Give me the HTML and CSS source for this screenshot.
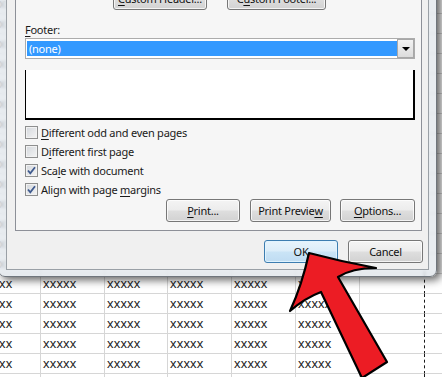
FILE: index.html
```html
<!DOCTYPE html>
<html>
<head>
<meta charset="utf-8">
<link rel="stylesheet" href="styles.css">
</head>
<body>
<div class="sheet">
  <div class="c">xxxxx</div><div class="e"></div><div class="e"></div><div class="e"></div><div class="e"></div><div class="e"></div><div class="e d"></div><div class="e"></div>
  <div class="c">xxxxx</div><div class="e"></div><div class="e"></div><div class="e"></div><div class="e"></div><div class="e"></div><div class="e d"></div><div class="e"></div>
  <div class="c">xxxxx</div><div class="e"></div><div class="e"></div><div class="e"></div><div class="e"></div><div class="e"></div><div class="e d"></div><div class="e"></div>
  <div class="c">xxxxx</div><div class="e"></div><div class="e"></div><div class="e"></div><div class="e"></div><div class="e"></div><div class="e d"></div><div class="e"></div>
  <div class="c">xxxxx</div><div class="e"></div><div class="e"></div><div class="e"></div><div class="e"></div><div class="e"></div><div class="e d"></div><div class="e"></div>
  <div class="c">xxxxx</div><div class="e"></div><div class="e"></div><div class="e"></div><div class="e"></div><div class="e"></div><div class="e d"></div><div class="e"></div>
  <div class="c">xxxxx</div><div class="e"></div><div class="e"></div><div class="e"></div><div class="e"></div><div class="e"></div><div class="e d"></div><div class="e"></div>
  <div class="c">xxxxx</div><div class="e"></div><div class="e"></div><div class="e"></div><div class="e"></div><div class="e"></div><div class="e d"></div><div class="e"></div>
  <div class="c">xxxxx</div><div class="e"></div><div class="e"></div><div class="e"></div><div class="e"></div><div class="e"></div><div class="e d"></div><div class="e"></div>
  <div class="c">xxxxx</div><div class="e"></div><div class="e"></div><div class="e"></div><div class="e"></div><div class="e"></div><div class="e d"></div><div class="e"></div>
  <div class="c">xxxxx</div><div class="e"></div><div class="e"></div><div class="e"></div><div class="e"></div><div class="e"></div><div class="e d"></div><div class="e"></div>
  <div class="c">xxxxx</div><div class="e"></div><div class="e"></div><div class="e"></div><div class="e"></div><div class="e"></div><div class="e d"></div><div class="e"></div>
  <div class="c">xxxxx</div><div class="e"></div><div class="e"></div><div class="e"></div><div class="e"></div><div class="e"></div><div class="e d"></div><div class="e"></div>
  <div class="c">xxxxx</div><div class="e"></div><div class="e"></div><div class="e"></div><div class="e"></div><div class="e"></div><div class="e d"></div><div class="e"></div>
  <div class="c">xxxxx</div><div class="c">xxxxx</div><div class="c">xxxxx</div><div class="c">xxxxx</div><div class="c">xxxxx</div><div class="c">xxxxx</div><div class="e d"></div><div class="e"></div>
  <div class="c">xxxxx</div><div class="c">xxxxx</div><div class="c">xxxxx</div><div class="c">xxxxx</div><div class="c">xxxxx</div><div class="c">xxxxx</div><div class="e d"></div><div class="e"></div>
  <div class="c">xxxxx</div><div class="c">xxxxx</div><div class="c">xxxxx</div><div class="c">xxxxx</div><div class="c">xxxxx</div><div class="c">xxxxx</div><div class="e d"></div><div class="e"></div>
  <div class="c">xxxxx</div><div class="c">xxxxx</div><div class="c">xxxxx</div><div class="c">xxxxx</div><div class="c">xxxxx</div><div class="c">xxxxx</div><div class="e d"></div><div class="e"></div>
  <div class="c">xxxxx</div><div class="c">xxxxx</div><div class="c">xxxxx</div><div class="c">xxxxx</div><div class="c">xxxxx</div><div class="c">xxxxx</div><div class="e d"></div><div class="e"></div>
  <div class="c">xxxxx</div><div class="c">xxxxx</div><div class="c">xxxxx</div><div class="c">xxxxx</div><div class="c">xxxxx</div><div class="c">xxxxx</div><div class="e d"></div><div class="e"></div>
</div>

<div class="dialog">
  <div class="client">
    <div class="panel">
      <div class="crow">
        <div class="btn w-ch"><u>C</u>ustom Header...</div>
        <div class="btn w-cf">C<u>u</u>stom Footer...</div>
      </div>
      <div class="lbl"><u>F</u>ooter:</div>
      <div class="combo">
        <div class="sel">(none)</div>
        <div class="drop"><span class="tri"></span></div>
      </div>
      <div class="preview"></div>
      <div class="checks">
        <div class="chk"><span class="cb"></span><span><u>D</u>ifferent odd and even pages</span></div>
        <div class="chk"><span class="cb"></span><span>D<u>i</u>fferent first page</span></div>
        <div class="chk"><span class="cb"><svg class="mark" viewBox="0 0 11 11"><polyline points="2,5.5 4.3,8.3 9,2.2"/></svg></span><span>Sca<u>l</u>e with document</span></div>
        <div class="chk"><span class="cb"><svg class="mark" viewBox="0 0 11 11"><polyline points="2,5.5 4.3,8.3 9,2.2"/></svg></span><span>Align with page <u>m</u>argins</span></div>
      </div>
      <div class="brow">
        <div class="btn w-pr"><u>P</u>rint...</div>
        <div class="btn w-pp">Print Previe<u>w</u></div>
        <div class="btn w-op"><u>O</u>ptions...</div>
      </div>
    </div>
    <div class="okrow">
      <div class="btn def w-ok">OK</div>
      <div class="btn w-cn">Cancel</div>
    </div>
  </div>
</div>

<svg class="arrow" viewBox="0 0 442 377" width="442" height="377">
  <path d="M309,253 Q343,262 376,268 Q352,268 338,277 L387,362 L362,378 L321,292 Q305,298 290,311 Q302,285 309,253 Z"/>
</svg>
</body>
</html>
```
FILE: styles.css
```css
* { box-sizing: border-box; }
html, body { margin: 0; padding: 0; }
body {
  width: 442px;
  height: 377px;
  overflow: hidden;
  position: relative;
  background: #ffffff;
  font-family: "Noto Sans", "Open Sans", sans-serif;
  font-size: 11px;
  letter-spacing: -0.25px;
  color: #1a1a1a;
}

/* spreadsheet behind */
.sheet {
  display: grid;
  grid-template-columns: 64px 64px 63px 64px 64px 64px 65px 60px;
  grid-auto-rows: 20px;
  margin-top: -6px;
  margin-left: -23px;
  width: 508px;
  font-family: "Liberation Sans", Arial, sans-serif;
  font-size: 13px;
  letter-spacing: 0.2px;
  color: #1b1b1b;
}
.c, .e {
  border-right: 1px solid #d6d6d6;
  border-bottom: 1px solid #d6d6d6;
  line-height: 19px;
  padding-left: 2px;
  white-space: nowrap;
}
.d { border-right: 1px dashed #1a1a1a; }

/* dialog window */
.dialog {
  position: absolute;
  left: -2px;
  top: -41px;
  width: 439px;
  padding: 7px 7px 6px 7px;
  background: rgba(226, 231, 236, 0.80);
  backdrop-filter: blur(1.5px);
  border: 1px solid #6f757c;
  border-radius: 0 0 7px 7px;
  box-shadow: 4px 3px 8px rgba(0, 0, 0, 0.62);
}
.client {
  background: #f0f0f0;
  border: 1px solid #9aa0a6;
  padding: 10px 6px 6px 8px;
}
.panel {
  background: #f6f6f6;
  border: 1px solid #8d9098;
  padding: 8px 6px 8px 9px;
}

.btn {
  height: 23px;
  border: 1px solid #777;
  border-radius: 3px;
  background: linear-gradient(#f4f4f4 0%, #ececec 48%, #dedede 52%, #d2d2d2 100%);
  box-shadow: inset 0 0 0 1px rgba(255, 255, 255, 0.75);
  display: flex;
  align-items: center;
  justify-content: center;
  white-space: nowrap;
  color: #111;
}
.def {
  border-color: #3d7db0;
  background: linear-gradient(#e8f4fc 0%, #dcedf9 48%, #cae4f6 52%, #bfdcf2 100%);
  box-shadow: inset 0 0 0 1px rgba(225, 244, 255, 0.9);
}
u { text-decoration-thickness: 1px; text-underline-offset: 2px; }

.crow { display: flex; gap: 20px; margin-left: 88px; }
.w-ch { width: 94px; }
.w-cf { width: 99px; }

.lbl { margin-top: 12px; line-height: 16px; }

.combo {
  height: 21px;
  display: flex;
  border: 1px solid #acacac;
  background: #fff;
}
.sel {
  flex: 1;
  margin: 2px 0 2px 1px;
  background: #3399ff;
  color: #fff;
  line-height: 15px;
  padding-left: 2px;
}
.drop {
  width: 17px;
  border: 1px solid #a8a8a8;
  background: linear-gradient(#f3f3f3, #dcdcdc);
  display: flex;
  align-items: center;
  justify-content: center;
}
.tri {
  width: 0;
  height: 0;
  border-left: 4px solid transparent;
  border-right: 4px solid transparent;
  border-top: 4px solid #000;
}

.preview {
  margin-top: 11px;
  height: 50px;
  background: #fff;
  border-left: 1px solid #000;
  border-right: 2px solid #000;
  border-bottom: 2px solid #000;
}

.checks { margin-top: 3px; }
.chk {
  height: 19px;
  display: flex;
  align-items: center;
  gap: 3px;
}
.cb {
  width: 13px;
  height: 13px;
  border: 1px solid #8e8f8f;
  background: linear-gradient(135deg, #d3d7dc 0%, #f4f4f4 100%);
  box-shadow: inset 0 0 0 1px #f2f2f2;
  display: flex;
  align-items: center;
  justify-content: center;
  flex: none;
}
.mark { width: 11px; height: 11px; }
.mark polyline { fill: none; stroke: #3f5a8e; stroke-width: 1.8; }

.brow { display: flex; justify-content: flex-end; }
.w-pr { width: 74px; }
.w-pp { width: 81px; margin-left: 10px; }
.w-op { width: 75px; margin-left: 9px; }

.okrow {
  display: flex;
  justify-content: flex-end;
  gap: 10px;
  margin-top: 9px;
  margin-right: -1px;
}
.w-ok { width: 74px; }
.w-cn { width: 75px; }

.arrow { position: absolute; left: 0; top: 0; }
.arrow path { fill: #ec1c24; stroke: #000; stroke-width: 2.2; stroke-linejoin: round; }
```
